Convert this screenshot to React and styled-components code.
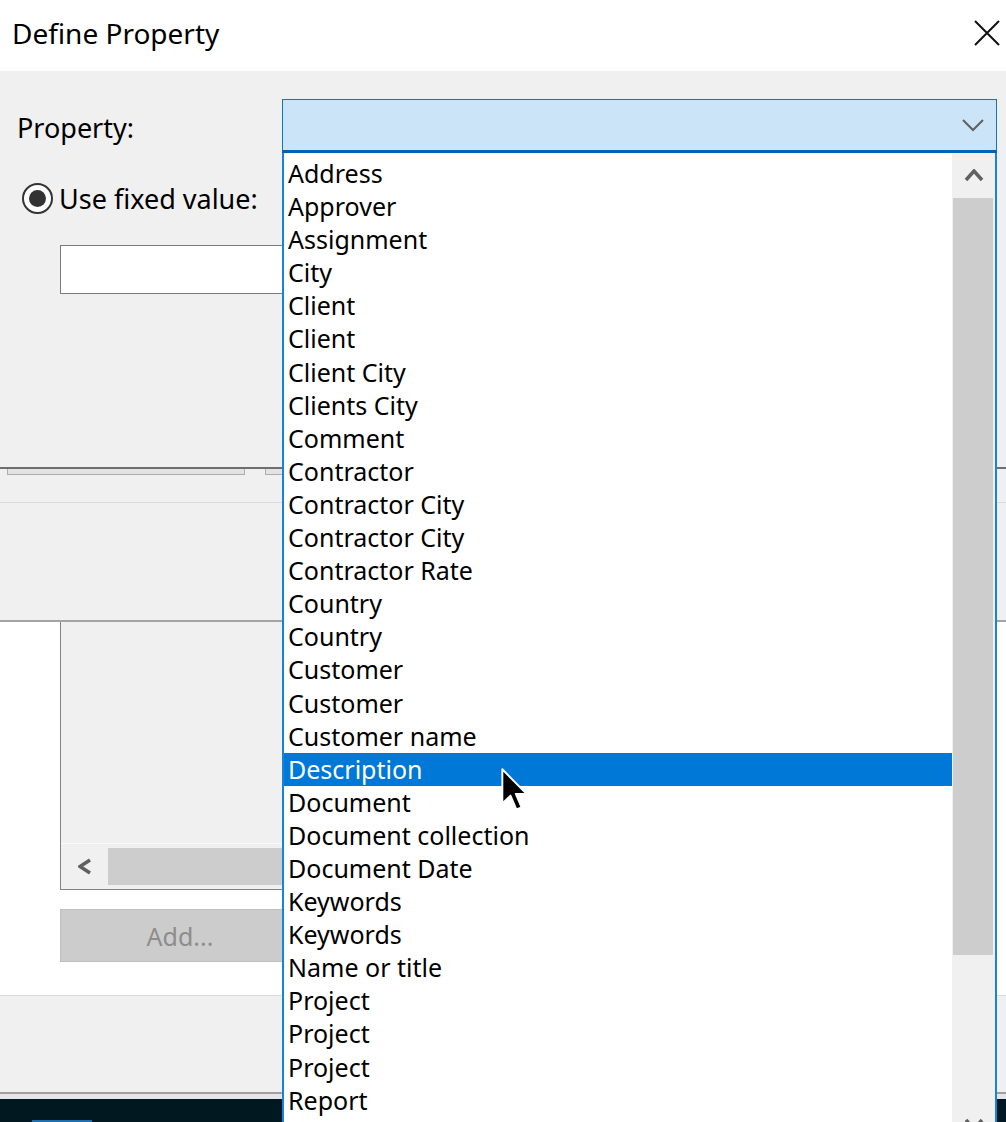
import React from 'react';
import styled, { createGlobalStyle } from 'styled-components';

const GlobalStyle = createGlobalStyle`
    html, body {
        margin: 0;
        padding: 0;
        background: #fff;
        overflow: hidden;
    }
    body {
        font-family: "Noto Sans", "Open Sans", sans-serif;
        color: #000;
    }
`;

const properties = [
    'Address', 'Approver', 'Assignment', 'City', 'Client', 'Client', 'Client City',
    'Clients City', 'Comment', 'Contractor', 'Contractor City', 'Contractor City',
    'Contractor Rate', 'Country', 'Country', 'Customer', 'Customer', 'Customer name',
    'Description', 'Document', 'Document collection', 'Document Date', 'Keywords',
    'Keywords', 'Name or title', 'Project', 'Project', 'Project', 'Report',
];

const Screen = styled.div`
    position: relative;
    width: 1006px;
    height: 1122px;
    overflow: hidden;
    display: flex;
    flex-direction: column;
    background: #fff;
`;

const TitleBar = styled.div`
    flex-shrink: 0;
    height: 71px;
    display: flex;
    align-items: center;
    justify-content: space-between;
    padding: 0 4px 0 12px;
    box-sizing: border-box;
    background: #fff;
`;

const Title = styled.div`
    font-size: 28px;
    line-height: 1;
    margin-top: -6px;
`;

const CloseButton = styled.div`
    width: 30px;
    height: 30px;
    display: flex;
    align-items: center;
    justify-content: center;
    margin-top: -6px;
`;

const DialogBody = styled.div`
    flex-shrink: 0;
    height: 398px;
    box-sizing: border-box;
    background: #f0f0f0;
    border-bottom: 2px solid #6e6e6e;
    padding: 28px 9px 0 17px;
    display: flex;
    flex-direction: column;
    align-items: flex-start;
`;

const PropertyRow = styled.div`
    align-self: stretch;
    display: flex;
    align-items: center;
`;

const FieldLabel = styled.span`
    font-size: 27px;
    line-height: 31px;
    white-space: nowrap;
`;

const PropertyLabel = styled(FieldLabel)`
    width: 265px;
    margin-top: 3px;
`;

const ComboWrap = styled.div`
    position: relative;
    flex: 1;
    height: 54px;
    z-index: 2;
`;

const ComboBox = styled.div`
    height: 100%;
    box-sizing: border-box;
    background: #cce4f7;
    border: 1px solid #0078d7;
    border-bottom: 3px solid #0063b1;
    display: flex;
    align-items: center;
    justify-content: flex-end;
    padding-right: 11px;
`;

const DropList = styled.div`
    position: absolute;
    top: 100%;
    left: 0;
    right: 0;
    height: 1010px;
    background: #fff;
    border-left: 2px solid #1a82dc;
    border-right: 2px solid #1a82dc;
    display: flex;
`;

const ItemColumn = styled.div`
    flex: 1;
    padding-top: 4px;
`;

const Item = styled.div`
    height: 33.1px;
    line-height: 33.1px;
    padding-left: 4px;
    font-size: 25px;
    white-space: nowrap;
    background: ${p => (p.$selected ? '#0078d7' : 'transparent')};
    color: ${p => (p.$selected ? '#fff' : '#000')};
`;

const VScroll = styled.div`
    width: 43px;
    flex-shrink: 0;
    background: #f0f0f0;
    display: flex;
    flex-direction: column;
`;

const ScrollButton = styled.div`
    height: 45px;
    flex-shrink: 0;
    display: flex;
    align-items: center;
    justify-content: center;
`;

const VThumb = styled.div`
    height: 757px;
    flex-shrink: 0;
    margin: 0 2px 0 1px;
    background: #cdcdcd;
`;

const VTrack = styled.div`
    height: 147px;
    flex-shrink: 0;
`;

const RadioRow = styled.div`
    margin-top: 30px;
    padding-left: 5px;
    display: flex;
    align-items: center;
    gap: 6px;
`;

const RadioOuter = styled.div`
    width: 31px;
    height: 31px;
    box-sizing: border-box;
    border-radius: 50%;
    border: 2px solid #333;
    background: #fff;
    display: flex;
    align-items: center;
    justify-content: center;
`;

const RadioDot = styled.div`
    width: 17px;
    height: 17px;
    border-radius: 50%;
    background: #333;
`;

const TextBox = styled.div`
    margin: 31px 0 0 43px;
    width: 640px;
    height: 49px;
    box-sizing: border-box;
    border: 1px solid #7a7a7a;
    background: #fff;
`;

const BehindTop = styled.div`
    flex-shrink: 0;
    height: 153px;
    box-sizing: border-box;
    background: #f0f0f0;
    border-bottom: 2px solid #a3a3a3;
`;

const GhostRow = styled.div`
    display: flex;
    gap: 20px;
    padding-left: 7px;
`;

const GhostButton = styled.div`
    width: 238px;
    height: 6px;
    box-sizing: border-box;
    border: 1px solid #adadad;
    border-top: none;
    background: #e3e3e3;
`;

const Divider = styled.div`
    margin-top: 27px;
    height: 1px;
    background: #dadada;
`;

const BehindContent = styled.div`
    flex-shrink: 0;
    height: 373px;
    box-sizing: border-box;
    padding-left: 60px;
    background: #fff;
    display: flex;
    flex-direction: column;
`;

const Panel = styled.div`
    width: 240px;
    height: 268px;
    box-sizing: border-box;
    border: 1px solid #838383;
    border-top: none;
    background: #f0f0f0;
    display: flex;
    flex-direction: column;
    justify-content: flex-end;
`;

const HScroll = styled.div`
    height: 46px;
    box-sizing: border-box;
    border-top: 1px solid #fafafa;
    display: flex;
    align-items: center;
`;

const HArrow = styled.div`
    width: 47px;
    display: flex;
    align-items: center;
    justify-content: center;
`;

const HThumb = styled.div`
    flex: 1;
    height: 37px;
    background: #cdcdcd;
`;

const AddButton = styled.div`
    margin-top: 19px;
    width: 240px;
    height: 53px;
    box-sizing: border-box;
    background: #cccccc;
    border: 1px solid #bfbfbf;
    color: #8d8d8d;
    font-size: 25px;
    display: flex;
    align-items: center;
    justify-content: center;
`;

const Footer = styled.div`
    flex-shrink: 0;
    height: 97px;
    box-sizing: border-box;
    border-top: 1px solid #dadada;
    background: #f0f0f0;
`;

const FooterLip = styled.div`
    flex-shrink: 0;
    height: 7px;
    box-sizing: border-box;
    border-top: 2px solid #a0a0a0;
    background: #e6e6e6;
`;

const Taskbar = styled.div`
    flex: 1;
    background: #011821;
    display: flex;
    align-items: flex-end;
    padding-left: 32px;
`;

const TaskMark = styled.div`
    width: 60px;
    height: 2px;
    background: #1f6fae;
`;

const Cursor = styled.svg`
    position: absolute;
    left: 501px;
    top: 768px;
    z-index: 5;
`;

function Chevron({ dir, color = '#606060', width = 3.5, w = 20, h = 13 }) {
    const pts = {
        down: `2,2 ${w / 2},${h - 2} ${w - 2},2`,
        up: `2,${h - 2} ${w / 2},2 ${w - 2},${h - 2}`,
        left: `${w - 2},2 2,${h / 2} ${w - 2},${h - 2}`,
    }[dir];
    return (
        <svg width={w} height={h} viewBox={`0 0 ${w} ${h}`}>
            <polyline points={pts} fill="none" stroke={color} strokeWidth={width} />
        </svg>
    );
}

export default function App() {
    return (
        <Screen>
            <GlobalStyle />
            <TitleBar>
                <Title>Define Property</Title>
                <CloseButton>
                    <svg width="26" height="26" viewBox="0 0 26 26">
                        <path d="M1 1 L25 25 M25 1 L1 25" stroke="#111" strokeWidth="2" fill="none" />
                    </svg>
                </CloseButton>
            </TitleBar>

            <DialogBody>
                <PropertyRow>
                    <PropertyLabel>Property:</PropertyLabel>
                    <ComboWrap>
                        <ComboBox>
                            <Chevron dir="down" width={2} w={24} h={14} />
                        </ComboBox>
                        <DropList>
                            <ItemColumn>
                                {properties.map((name, i) => (
                                    <Item key={i} $selected={name === 'Description'}>{name}</Item>
                                ))}
                            </ItemColumn>
                            <VScroll>
                                <ScrollButton><Chevron dir="up" /></ScrollButton>
                                <VThumb />
                                <VTrack />
                                <ScrollButton><Chevron dir="down" /></ScrollButton>
                            </VScroll>
                        </DropList>
                    </ComboWrap>
                </PropertyRow>
                <RadioRow>
                    <RadioOuter><RadioDot /></RadioOuter>
                    <FieldLabel>Use fixed value:</FieldLabel>
                </RadioRow>
                <TextBox />
            </DialogBody>

            <BehindTop>
                <GhostRow>
                    <GhostButton />
                    <GhostButton />
                </GhostRow>
                <Divider />
            </BehindTop>

            <BehindContent>
                <Panel>
                    <HScroll>
                        <HArrow><Chevron dir="left" w={14} h={17} /></HArrow>
                        <HThumb />
                    </HScroll>
                </Panel>
                <AddButton>Add...</AddButton>
            </BehindContent>

            <Footer />
            <FooterLip />
            <Taskbar><TaskMark /></Taskbar>

            <Cursor width="29" height="46" viewBox="0 0 13.5 21.5">
                <path d="M0.6 0.6 L0.6 16.6 L4.4 12.9 L7.2 19.4 L9.6 18.4 L6.9 12.1 L11.9 12.1 Z"
                      fill="#000" stroke="#fff" strokeWidth="0.9" strokeLinejoin="round" />
            </Cursor>
        </Screen>
    );
}
